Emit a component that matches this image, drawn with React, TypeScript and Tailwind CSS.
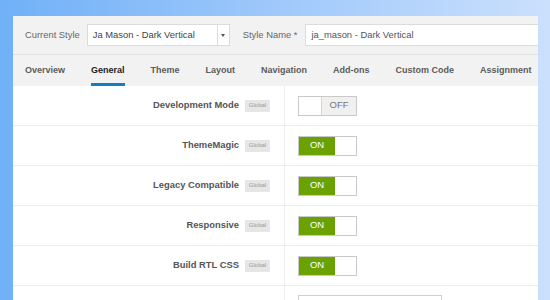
const tabs = ['Overview', 'General', 'Theme', 'Layout', 'Navigation', 'Add-ons', 'Custom Code', 'Assignment'];

const rows = [
  { label: 'Development Mode', on: false },
  { label: 'ThemeMagic', on: true },
  { label: 'Legacy Compatible', on: true },
  { label: 'Responsive', on: true },
  { label: 'Build RTL CSS', on: true },
];

const Toggle = ({ on }: { on: boolean }) => {
  if (on) {
    return (
      <div className="flex h-[20px] w-[59px] border border-[#c9c9c9] text-[9.5px]">
        <div className="w-[36px] bg-[#6ba100] text-white flex items-center justify-center">ON</div>
        <div className="flex-1 bg-white" />
      </div>
    );
  }
  return (
    <div className="flex h-[20px] w-[59px] border border-[#c9c9c9] text-[9.5px]">
      <div className="w-[23px] bg-white border-r border-[#d4d4d4]" />
      <div className="flex-1 bg-[#f0f0f0] text-[#777] flex items-center justify-center">OFF</div>
    </div>
  );
};

const Label = ({ text }: { text: string }) => (
  <div className="flex items-center justify-end gap-[6px] pr-[14px] border-r border-[#eeeeee]">
    <span className="text-[9.4px] font-bold text-[#555] whitespace-nowrap">{text}</span>
    <span className="h-[12px] w-[25px] bg-[#e6e6e6] text-[#9a9a9a] text-[6px] flex items-center justify-center">Global</span>
  </div>
);

export default function App() {
  return (
    <div
      className="h-[300px] w-[550px] overflow-hidden pt-[16px] pl-[13px] bg-gradient-to-r from-[#70b0f7] to-[#cbe0fd]"
      style={{ fontFamily: '"Liberation Sans", Arial, sans-serif' }}
    >
      <div className="w-[525px] h-[300px] overflow-hidden bg-white">
        {/* style header */}
        <div className="h-[39px] bg-[#f2f2f2] border-b border-[#e2e2e2] flex items-center pl-[12px] text-[9.4px] text-[#666] whitespace-nowrap">
          <span className="shrink-0">Current Style</span>
          <div className="ml-[7px] flex shrink-0 h-[22px] w-[143px] bg-white border border-[#dcdcdc]">
            <div className="flex-1 flex items-center pl-[5px] text-[#444]">Ja Mason - Dark Vertical</div>
            <div className="w-[12px] border-l border-[#dcdcdc] flex items-center justify-center">
              <div className="w-0 h-0 border-l-[2.5px] border-r-[2.5px] border-t-[3px] border-l-transparent border-r-transparent border-t-[#555]" />
            </div>
          </div>
          <span className="ml-[13px] shrink-0">Style Name *</span>
          <div className="ml-[8px] h-[22px] w-[250px] shrink-0 bg-white border border-[#dcdcdc] flex items-center pl-[5px] text-[#555]">
            ja_mason - Dark Vertical
          </div>
        </div>

        {/* tabs */}
        <div className="h-[31px] bg-[#f2f2f2] flex pl-[12px] gap-[26px] text-[9px] font-bold whitespace-nowrap">
          {tabs.map((t) => (
            <div
              key={t}
              className={
                t === 'General'
                  ? 'flex items-center border-b-[3px] border-[#127ec3] pt-[3px] text-[#222]'
                  : 'flex items-center text-[#5c5c5c]'
              }
            >
              {t}
            </div>
          ))}
        </div>

        {/* settings rows */}
        {rows.map((r) => (
          <div key={r.label} className="grid grid-cols-[272px_1fr] h-[40px] border-b border-[#ececec]">
            <Label text={r.label} />
            <div className="flex items-center pl-[13px]">
              <Toggle on={r.on} />
            </div>
          </div>
        ))}
        <div className="grid grid-cols-[272px_1fr] h-[40px] border-b border-[#ececec]">
          <Label text="Optimize Folder" />
          <div className="flex items-center pl-[13px]">
            <div className="h-[22px] w-[144px] border border-[#cfcfcf] bg-white" />
          </div>
        </div>
      </div>
    </div>
  );
}
